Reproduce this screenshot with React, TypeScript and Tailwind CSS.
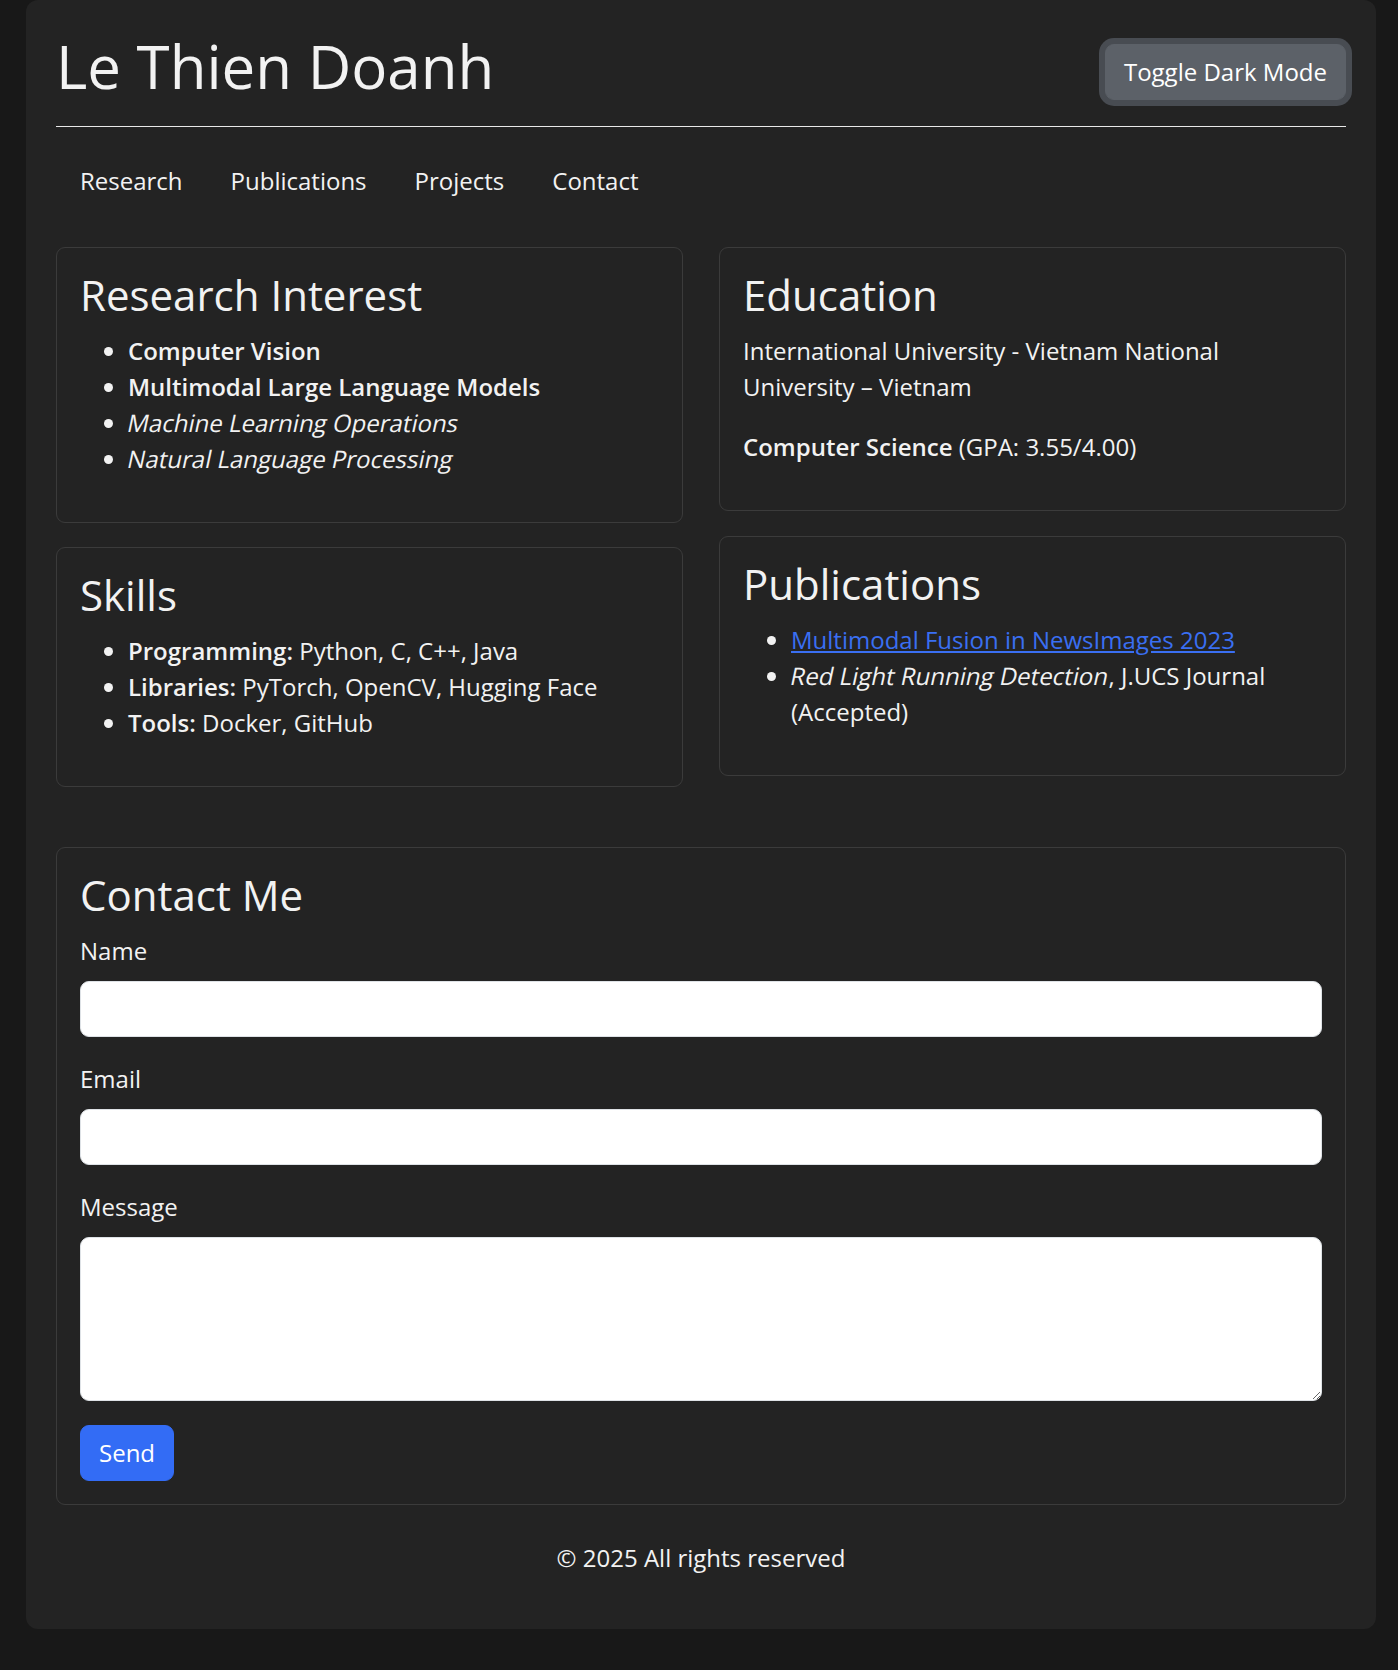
import React from 'react';

const Card = ({ title, children }: { title: string; children: React.ReactNode }) => (
  <div className="rounded-[9px] border border-[#3b3b3b] p-[23px]">
    <h2 className="mb-[14px] text-[42px] leading-[48px]">{title}</h2>
    {children}
  </div>
);

// slanted regular face, like the browser's synthetic italic in the reference
const Slant = ({ children }: { children: React.ReactNode }) => (
  <span className="inline-block -skew-x-12">{children}</span>
);

const App = () => {
  const fields = ['Name', 'Email'];

  return (
    <div
      className="min-h-screen bg-[#181818] pb-[41px] pl-[26px] pr-[22px] text-[24px] leading-[36px] text-[#f2f2f2]"
      style={{ fontFamily: '"Open Sans", "Noto Sans", sans-serif' }}
    >
      <div className="rounded-[12px] bg-[#232323] px-[30px] pb-[53px] pt-[30px]">
        <header className="mb-[12px] flex items-center justify-between">
          <h1 className="mb-[12px] text-[60px] leading-[72px]">Le Thien Doanh</h1>
          <button className="rounded-[9px] border border-[#5c6168] bg-[#5c6168] px-[18px] py-[9px] text-[24px] leading-[36px] text-white ring-[6px] ring-[#484c52]">
            Toggle Dark Mode
          </button>
        </header>
        <hr className="border-t border-[#e8e8e8]" />

        <nav className="mt-[24px] flex">
          {['Research', 'Publications', 'Projects', 'Contact'].map((item) => (
            <a key={item} href="#" className="px-[24px] py-[12px] text-[#f2f2f2]">
              {item}
            </a>
          ))}
        </nav>

        <div className="mt-[36px] grid grid-cols-2 items-start gap-x-[36px]">
          <div className="flex flex-col gap-[24px]">
            <Card title="Research Interest">
              <ul className="mb-[22px] list-disc pl-[48px]">
                <li className="font-semibold">Computer Vision</li>
                <li className="font-semibold">Multimodal Large Language Models</li>
                <li>
                  <Slant>Machine Learning Operations</Slant>
                </li>
                <li>
                  <Slant>Natural Language Processing</Slant>
                </li>
              </ul>
            </Card>
            <Card title="Skills">
              <ul className="mb-[22px] list-disc pl-[48px]">
                <li>
                  <strong className="font-semibold">Programming:</strong> Python, C, C++, Java
                </li>
                <li>
                  <strong className="font-semibold">Libraries:</strong> PyTorch, OpenCV, Hugging Face
                </li>
                <li>
                  <strong className="font-semibold">Tools:</strong> Docker, GitHub
                </li>
              </ul>
            </Card>
          </div>

          <div className="flex flex-col gap-[25px]">
            <Card title="Education">
              <p className="mb-[24px]">International University - Vietnam National University – Vietnam</p>
              <p className="mb-[22px]">
                <strong className="font-semibold">Computer Science</strong> (GPA: 3.55/4.00)
              </p>
            </Card>
            <Card title="Publications">
              <ul className="mb-[22px] list-disc pl-[48px]">
                <li>
                  <a href="#" className="text-[#3a6ff2] underline">
                    Multimodal Fusion in NewsImages 2023
                  </a>
                </li>
                <li>
                  <Slant>Red Light Running Detection</Slant>, J.UCS Journal (Accepted)
                </li>
              </ul>
            </Card>
          </div>
        </div>

        <div className="mt-[60px]">
          <Card title="Contact Me">
            <form onSubmit={(e) => e.preventDefault()}>
              {fields.map((f) => (
                <div key={f} className="mb-[24px]">
                  <label className="mb-[12px] block">{f}</label>
                  <input
                    type={f === 'Email' ? 'email' : 'text'}
                    className="block h-[56px] w-full rounded-[9px] border border-[#dee2e6] bg-white px-[18px] text-[24px] text-[#212529] outline-none"
                  />
                </div>
              ))}
              <div className="mb-[24px]">
                <label className="mb-[12px] block">Message</label>
                <textarea
                  rows={4}
                  className="block h-[164px] w-full rounded-[9px] border border-[#dee2e6] bg-white px-[18px] py-[9px] text-[24px] text-[#212529] outline-none"
                />
              </div>
              <button className="rounded-[9px] border border-[#336cf5] bg-[#336cf5] px-[18px] py-[9px] text-[24px] leading-[36px] text-white">
                Send
              </button>
            </form>
          </Card>
        </div>

        <footer className="mt-[35px] text-center">© 2025 All rights reserved</footer>
      </div>
    </div>
  );
};

export default App;
